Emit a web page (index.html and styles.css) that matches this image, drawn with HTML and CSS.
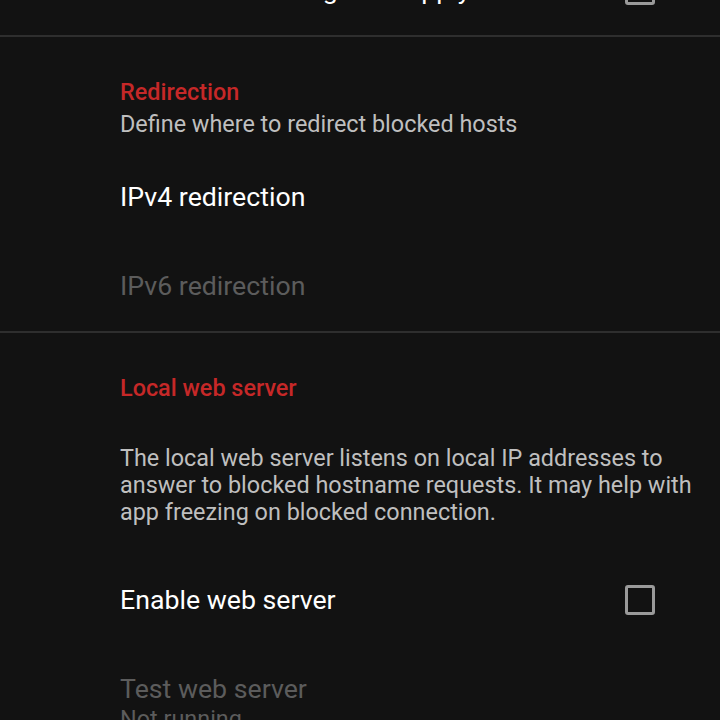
FILE: index.html
```html
<!DOCTYPE html>
<html lang="en">
<head>
    <meta charset="UTF-8">
    <meta name="viewport" content="width=device-width, initial-scale=1.0">
    <title>Preferences</title>
    <link rel="stylesheet" href="styles.css">
</head>
<body>
    <div class="screen">
        <!-- 上一组的最后一项 -->
        <div class="pref">
            <div class="pref-text">
                <div class="pref-title">Hide reboot dialog after apply</div>
            </div>
            <span class="checkbox"></span>
        </div>

        <div class="divider"></div>

        <!-- Redirection -->
        <div class="category">
            <div class="category-title">Redirection</div>
            <div class="category-summary">Define where to redirect blocked hosts</div>
        </div>
        <div class="pref">
            <div class="pref-text">
                <div class="pref-title">IPv4 redirection</div>
            </div>
        </div>
        <div class="pref disabled">
            <div class="pref-text">
                <div class="pref-title">IPv6 redirection</div>
            </div>
        </div>

        <div class="divider"></div>

        <!-- Local web server -->
        <div class="category">
            <div class="category-title">Local web server</div>
        </div>
        <div class="pref info">
            <div class="pref-text">
                <div class="pref-summary">The local web server listens on local IP addresses to answer to blocked hostname requests. It may help with app freezing on blocked connection.</div>
            </div>
        </div>
        <div class="pref">
            <div class="pref-text">
                <div class="pref-title">Enable web server</div>
            </div>
            <span class="checkbox"></span>
        </div>
        <div class="pref disabled">
            <div class="pref-text">
                <div class="pref-title">Test web server</div>
                <div class="pref-summary">Not running</div>
            </div>
        </div>
    </div>
</body>
</html>
```

FILE: styles.css
```css
*{
    margin: 0;
    padding: 0;
    box-sizing: border-box;
}
html, body{
    height: 100%;
    overflow: hidden;
}
body{
    background-color: #121212;
    font-family: Roboto, "Noto Sans", sans-serif;
    color: #ffffff;
}
/* 整体向上偏移，第一项只露出一部分 */
.screen{
    margin-top: -54px;
}
.divider{
    height: 2px;
    background-color: #2e2e2e;
}
/* 分组标题 */
.category{
    padding: 41px 20px 15px 120px;
}
.category-title{
    color: #c62828;
    font-size: 23.4px;
    font-weight: 500;
    line-height: 28px;
}
.category-summary{
    color: #bfbfbf;
    font-size: 23.4px;
    line-height: 27px;
    margin-top: 5px;
}
/* 设置项 */
.pref{
    display: flex;
    align-items: center;
    padding: 28px 20px 28px 120px;
    gap: 24px;
}
/* 只有说明文字的项 */
.pref.info{
    padding-bottom: 30px;
}
.pref-text{
    flex: 1;
}
.pref-title{
    font-size: 26.7px;
    line-height: 33px;
}
.pref-summary{
    color: #bfbfbf;
    font-size: 23.4px;
    line-height: 27px;
}
.pref.disabled .pref-title,
.pref.disabled .pref-summary{
    color: #5c5c5c;
}
.checkbox{
    width: 30px;
    height: 30px;
    border: 3px solid #9a9a9a;
    border-radius: 3px;
    flex-shrink: 0;
    margin: -2px 45px 0 0;
}
```
